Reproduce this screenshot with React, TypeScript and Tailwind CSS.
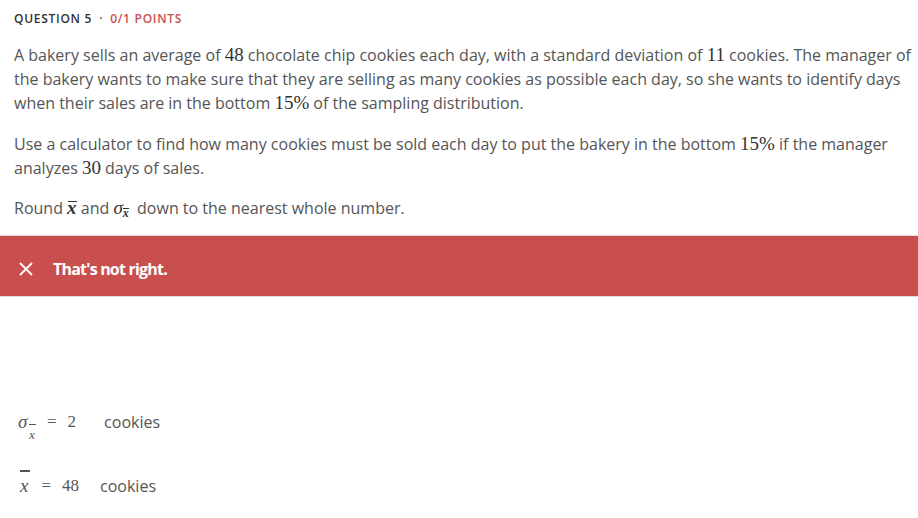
import React from "react";

const serif = '"Liberation Serif", "DejaVu Serif", serif';

const M = ({ children, className = "" }: { children: React.ReactNode; className?: string }) => (
  <span className={`text-[19px] leading-[0] text-[#333] ${className}`} style={{ fontFamily: serif }}>
    {children}
  </span>
);

export default function App() {
  return (
    <div className="w-[918px] h-[518px] bg-white overflow-hidden text-[#555]" style={{ fontFamily: '"Open Sans", sans-serif' }}>
      <div className="pl-[14px] pr-[2px] pt-[10px]">
        <div className="text-[12px] font-semibold tracking-[0.06em] leading-[18px] flex items-center">
          <span className="text-[#333]">QUESTION 5</span>
          <span className="text-[#555] mx-[7px]">·</span>
          <span className="text-[#c94f4f]">0/1 POINTS</span>
        </div>
        <p className="mt-[15px] text-[16px] leading-[24px]">
          A bakery sells an average of <M>48</M> chocolate chip cookies each day, with a standard deviation of <M>11</M> cookies. The manager of the bakery wants to make sure that they are selling as many cookies as possible each day, so she wants to identify days when their sales are in the bottom <M>15%</M> of the sampling distribution.
        </p>
        <p className="mt-[17px] text-[16px] leading-[24px]">
          Use a calculator to find how many cookies must be sold each day to put the bakery in the bottom <M>15%</M> if the manager analyzes <M>30</M> days of sales.
        </p>
        <p className="mt-[16px] text-[16px] leading-[24px]">
          Round{" "}
          <span className="relative inline-block italic font-bold text-[19px] leading-[20px] text-[#333]" style={{ fontFamily: serif }}>
            x
            <span className="absolute left-[1px] right-[0px] top-[3px] h-[1px] bg-[#333]" />
          </span>{" "}
          and{" "}
          <span className="inline-block italic text-[19px] leading-[20px] text-[#333]" style={{ fontFamily: serif }}>
            σ
            <span className="relative inline-block text-[12px] leading-[12px] align-[-3px] font-bold">
              x<span className="absolute left-0 right-0 top-[1px] h-[1px] bg-[#333]" />
            </span>
          </span>
          &nbsp; down to the nearest whole number.
        </p>
      </div>
      <div className="mt-[15px] border-t border-[#ddd]">
        <div className="h-[60px] bg-[#c94f4f] flex items-center pl-[18px] pt-[6px] text-white">
          <svg width="16" height="16" viewBox="0 0 16 16" className="mr-[19px]">
            <path d="M2 2 L14 14 M14 2 L2 14" stroke="white" strokeWidth="1.8" fill="none" />
          </svg>
          <span className="text-[16px] font-bold tracking-[-0.05em]">That's not right.</span>
        </div>
      </div>
      <div className="border-t border-[#ddd]" />
      <div className="pl-[18px] pt-[114px]">
        <div className="flex items-start h-[30px]">
          <span className="relative w-[22px] h-[30px] text-[#555]" style={{ fontFamily: serif }}>
            <span className="italic text-[19px] leading-[22px]">σ</span>
            <span className="absolute left-[11px] top-[13px] w-[7px] h-[1px] bg-[#555]" />
            <span className="absolute left-[11px] top-[14px] italic text-[13px]">x</span>
          </span>
          <span className="ml-[7px] text-[17px] leading-[22px]" style={{ fontFamily: serif }}>=</span>
          <span className="ml-[11px] text-[17px] leading-[22px]" style={{ fontFamily: serif }}>2</span>
          <span className="ml-[28px] text-[16px] leading-[22px]">cookies</span>
        </div>
        <div className="flex items-start mt-[34px]">
          <span className="relative italic text-[19px] leading-[22px] text-[#555] ml-[2px]" style={{ fontFamily: serif }}>
            <span className="absolute left-0 top-[-5px] w-[10px] h-[2px] bg-[#555]" />
            x
          </span>
          <span className="ml-[13px] text-[17px] leading-[22px]" style={{ fontFamily: serif }}>=</span>
          <span className="ml-[11px] text-[17px] leading-[22px]" style={{ fontFamily: serif }}>48</span>
          <span className="ml-[21px] text-[16px] leading-[22px]">cookies</span>
        </div>
      </div>
    </div>
  );
}
